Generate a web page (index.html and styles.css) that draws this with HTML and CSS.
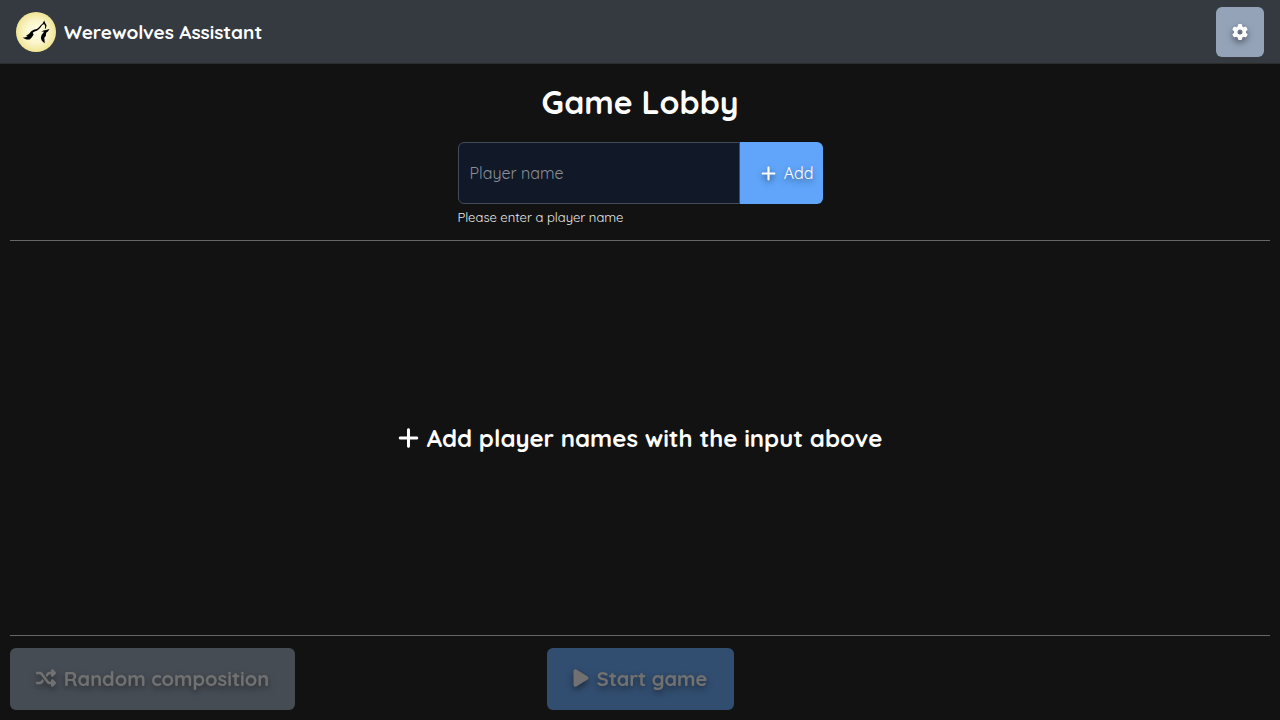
FILE: index.html
```html
<!DOCTYPE html>
<html lang="en">
<head>
<meta charset="utf-8">
<meta name="viewport" content="width=device-width, initial-scale=1">
<title>Werewolves Assistant - Game Lobby</title>
<link rel="stylesheet" href="styles.css">
</head>
<body class="page">
<header class="navbar">
  <a class="brand" href="#">
    <svg class="brand-logo" viewBox="0 0 40 40" aria-hidden="true">
      <defs>
        <radialGradient id="moon">
          <stop offset="0" stop-color="#fffde6"/>
          <stop offset=".55" stop-color="#fbf6cc"/>
          <stop offset="1" stop-color="#f0e594"/>
        </radialGradient>
      </defs>
      <circle cx="20" cy="20" r="20" fill="url(#moon)"/>
      <path d="M6.600 25.800c2.400-.2 3.800-.8 5-1.800l-1.800-.4c2.200-.6 3.600-1.800 4.600-3.400 1.400-1.800 3.400-2.800 5.600-3 1.800-.6 3.200-2.200 4.400-3.800l2.200-2 1.600-2.800 1 2.500 1.400 2.500-.9 3.200-.9-.2.4-2.500-1.200-2.200-2 1.400c-1.800 2.800-3.400 4.900-5.600 5.600-1.600.5-2.900.8-3.700 1.900l.9 1.600-1.500 2.600-2.400 2.400-3.300.2z"/>
      <path d="M25.200 19.800c1.300-1 2.600-1.700 3.900-1.600l4.500-1.300-1.700 2.600-1.700 1.200-.4 3.200-1.500 1.800.5 5.600c-2.600-1.600-3.800-3.500-3.900-5.800l.8-2.800 1.700-1.900.5-1.200z"/>
    </svg>
    <span>Werewolves Assistant</span>
  </a>
  <button class="button button-settings" type="button" aria-label="Settings">
    <svg class="icon" viewBox="0 0 512 512" aria-hidden="true"><path d="M495.900 166.600c3.200 8.700 .5 18.400-6.400 24.600l-43.300 39.400c1.100 8.300 1.700 16.800 1.700 25.400s-.6 17.100-1.700 25.400l43.300 39.400c6.900 6.200 9.600 15.900 6.400 24.600c-4.400 11.900-9.700 23.300-15.800 34.300l-4.700 8.100c-6.600 11-14 21.400-22.100 31.200c-5.900 7.200-15.700 9.600-24.500 6.800l-55.700-17.700c-13.400 10.300-28.200 18.900-44 25.400l-12.500 57.100c-2 9.100-9 16.300-18.200 17.800c-13.800 2.300-28 3.500-42.500 3.500s-28.700-1.200-42.500-3.500c-9.200-1.500-16.200-8.700-18.200-17.800l-12.500-57.100c-15.800-6.500-30.600-15.100-44-25.400L83.100 425.900c-8.800 2.800-18.600 .3-24.500-6.800c-8.100-9.800-15.500-20.200-22.100-31.200l-4.700-8.100c-6.100-11-11.400-22.400-15.800-34.300c-3.200-8.700-.5-18.400 6.400-24.600l43.300-39.400C64.600 273.100 64 264.600 64 256s.6-17.100 1.700-25.400L22.400 191.200c-6.900-6.200-9.600-15.900-6.400-24.600c4.400-11.900 9.700-23.300 15.800-34.300l4.700-8.100c6.600-11 14-21.400 22.100-31.200c5.900-7.200 15.700-9.600 24.500-6.800l55.700 17.700c13.400-10.300 28.200-18.900 44-25.400l12.500-57.100c2-9.100 9-16.300 18.200-17.800C227.300 1.200 241.500 0 256 0s28.700 1.200 42.500 3.500c9.200 1.500 16.200 8.700 18.200 17.800l12.500 57.100c15.800 6.500 30.600 15.100 44 25.400l55.700-17.700c8.800-2.800 18.600-.3 24.500 6.800c8.100 9.800 15.500 20.200 22.100 31.200l4.700 8.100c6.100 11 11.400 22.400 15.800 34.300zM256 336a80 80 0 1 0 0-160 80 80 0 1 0 0 160z"/></svg>
  </button>
</header>
<main class="lobby">
  <h1 class="lobby-title">Game Lobby</h1>
  <form class="player-form">
    <div class="input-group">
      <input class="player-input" id="player-name" type="text" placeholder="Player name" aria-label="Player name" aria-describedby="player-help">
      <button class="button button-add" type="button">
        <svg class="icon icon-plus" viewBox="0 0 448 512" aria-hidden="true"><path d="M256 80c0-17.700-14.300-32-32-32s-32 14.300-32 32V224H48c-17.700 0-32 14.300-32 32s14.300 32 32 32H192V432c0 17.700 14.300 32 32 32s32-14.300 32-32V288H400c17.700 0 32-14.300 32-32s-14.300-32-32-32H256V80z"/></svg>
        <span>Add</span>
      </button>
    </div>
    <label class="player-help" id="player-help" for="player-name">Please enter a player name</label>
  </form>
  <hr class="divider">
  <section class="empty">
    <h2 class="empty-title">
      <svg class="icon icon-empty" viewBox="0 0 448 512" aria-hidden="true"><path d="M256 80c0-17.700-14.300-32-32-32s-32 14.300-32 32V224H48c-17.700 0-32 14.300-32 32s14.300 32 32 32H192V432c0 17.700 14.300 32 32 32s32-14.300 32-32V288H400c17.700 0 32-14.300 32-32s-14.300-32-32-32H256V80z"/></svg>
      <span>Add player names with the input above</span>
    </h2>
  </section>
  <hr class="divider">
  <footer class="actions">
    <button class="button button-large button-random" type="button" disabled>
      <svg class="icon icon-shuffle" viewBox="0 0 512 512" aria-hidden="true"><path d="M403.800 34.400c12-5 25.700-2.200 34.900 6.900l64 64c6 6 9.400 14.100 9.400 22.600s-3.400 16.600-9.400 22.600l-64 64c-9.200 9.200-22.900 11.900-34.900 6.900s-19.800-16.600-19.800-29.600V160H352c-10.100 0-19.600 4.700-25.600 12.800L284 229.300 244 176l31.200-41.600C293.300 110.200 321.800 96 352 96h32V64c0-12.900 7.800-24.600 19.800-29.600zM164 282.700L204 336l-31.200 41.600C154.700 401.800 126.200 416 96 416H32c-17.700 0-32-14.300-32-32s14.300-32 32-32H96c10.100 0 19.600-4.700 25.600-12.800L164 282.700zm274.600 188c-9.200 9.200-22.900 11.900-34.900 6.900s-19.800-16.600-19.800-29.600V416H352c-30.200 0-58.700-14.200-76.800-38.400L121.600 172.800c-6-8.100-15.500-12.800-25.600-12.800H32c-17.700 0-32-14.300-32-32s14.300-32 32-32H96c30.200 0 58.700 14.200 76.800 38.400L326.400 339.200c6 8.100 15.500 12.800 25.600 12.800h32V320c0-12.900 7.800-24.600 19.800-29.600s25.700-2.200 34.900 6.900l64 64c6 6 9.400 14.100 9.400 22.600s-3.400 16.600-9.400 22.600l-64 64z"/></svg>
      <span>Random composition</span>
    </button>
    <button class="button button-large button-start" type="button" disabled>
      <svg class="icon icon-play" viewBox="0 0 384 512" aria-hidden="true"><path d="M73 39c-14.800-9.100-33.400-9.400-48.500-.9S0 62.600 0 80V432c0 17.400 9.400 33.400 24.500 41.900s33.700 8.100 48.500-.9L361 297c14.300-8.700 23-24.200 23-41s-8.700-32.200-23-41L73 39z"/></svg>
      <span>Start game</span>
    </button>
  </footer>
</main>
</body>
</html>
```
FILE: styles.css
```css
* {
  box-sizing: border-box;
}

.page {
  margin: 0;
  min-height: 100vh;
  display: flex;
  flex-direction: column;
  background: #121212;
  color: #ffffff;
  font-family: Quicksand, Inter, sans-serif;
  font-size: 16px;
}

.navbar {
  display: flex;
  align-items: center;
  justify-content: space-between;
  height: 64px;
  padding: 0 16px;
  background: #343a40;
  border-bottom: 1px solid #2c2c2c;
}

.brand {
  display: flex;
  align-items: center;
  gap: 8px;
  color: inherit;
  font-size: 19px;
  font-weight: 700;
  text-decoration: none;
}

.brand-logo {
  width: 40px;
  height: 40px;
}

.icon {
  flex: none;
  width: 16px;
  height: 16px;
  fill: currentColor;
  overflow: visible;
}

.button {
  display: flex;
  align-items: center;
  justify-content: center;
  gap: 8px;
  border: 0;
  border-radius: 6px;
  color: #ffffff;
  font: inherit;
  text-shadow: 0 3px 6px rgba(0, 0, 0, 0.5);
}

.button .icon {
  filter: drop-shadow(0 3px 3px rgba(0, 0, 0, 0.5));
}

.button-settings {
  width: 48px;
  height: 50px;
  padding: 0;
  background: #94a3b8;
}

.lobby {
  flex: 1;
  display: flex;
  flex-direction: column;
  padding: 18px 10px 10px;
}

.lobby-title {
  margin: 0 0 20px;
  font-size: 32px;
  font-weight: 700;
  line-height: 40px;
  text-align: center;
}

.player-form {
  width: 365px;
  max-width: 100%;
  margin: 0 auto 13px;
}

.input-group {
  display: flex;
  height: 62px;
}

.player-input {
  flex: 1;
  min-width: 0;
  padding: 0 11px;
  border: 1px solid #424b57;
  border-radius: 6px 0 0 6px;
  background: #111827;
  color: #ffffff;
  font: inherit;
}

.player-input::placeholder {
  color: #8b9099;
  opacity: 1;
}

.button-add {
  width: 83px;
  padding: 0 9px 0 21px;
  justify-content: space-between;
  border-radius: 0 6px 6px 0;
  background: #60a5fa;
}

.icon-plus {
  width: 15px;
  height: 17px;
}

.player-help {
  display: block;
  margin-top: 3px;
  color: #ececec;
  font-size: 13px;
  line-height: 20px;
}

.divider {
  width: 100%;
  margin: 0;
  border: 0;
  border-top: 1px solid #666666;
}

.empty {
  flex: 1;
  display: flex;
  align-items: center;
  justify-content: center;
}

.empty-title {
  display: flex;
  align-items: center;
  gap: 8px;
  margin: 0;
  font-size: 24px;
  font-weight: 700;
}

.icon-empty {
  width: 21px;
  height: 24px;
}

.actions {
  display: grid;
  grid-template-columns: 1fr auto 1fr;
  padding-top: 12px;
}

.button-large {
  height: 62px;
  padding: 0 0 2px;
  font-size: 20px;
  font-weight: 700;
  opacity: 0.4;
}

.button-random {
  width: 285px;
  background: #94a3b8;
}

.button-start {
  width: 187px;
  background: #60a5fa;
}

.icon-shuffle {
  width: 20px;
  height: 20px;
}

.icon-play {
  width: 16px;
  height: 20px;
}
```
